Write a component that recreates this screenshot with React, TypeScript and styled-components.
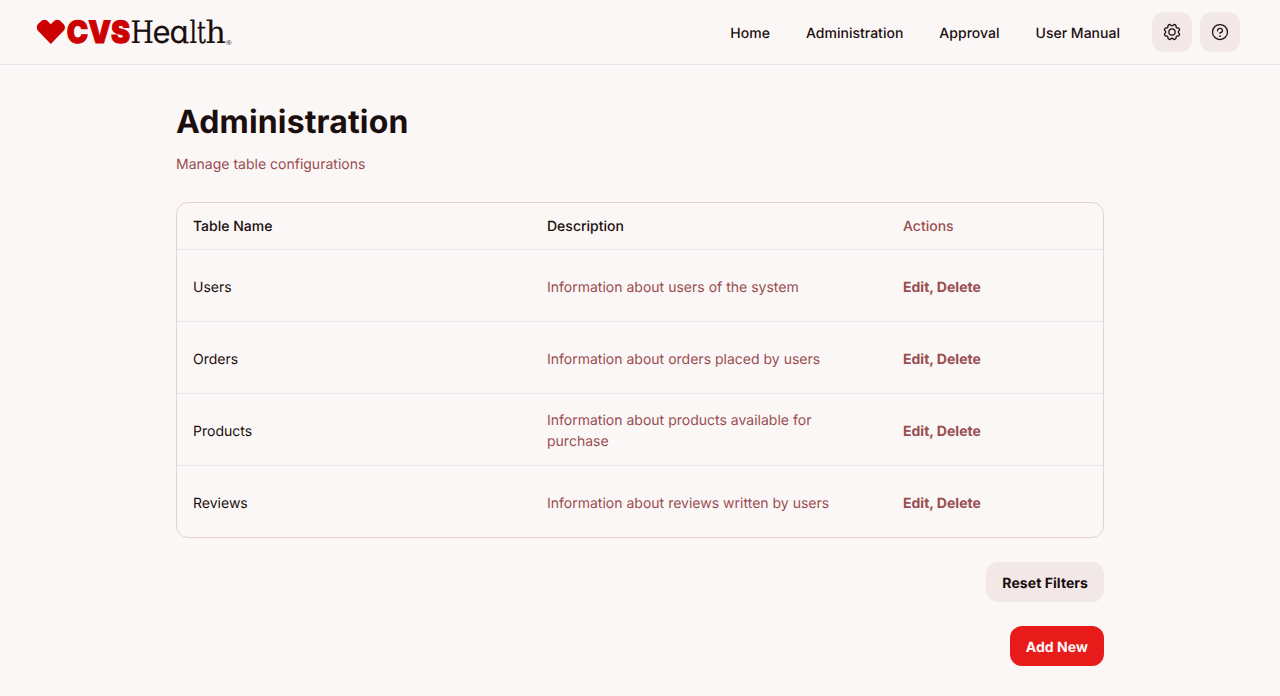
import React from "react";
import styled, { createGlobalStyle } from "styled-components";
import { PiGear, PiQuestion } from "react-icons/pi";

const GlobalStyle = createGlobalStyle`
  *, *::before, *::after { box-sizing: border-box; }
  body {
    margin: 0;
    background: #fbf7f6;
    color: #1b0e0e;
    font-family: Inter, "Noto Sans", sans-serif;
    font-size: 14px;
    line-height: 21px;
    letter-spacing: 0.008px;
    text-rendering: geometricPrecision;
  }
`;

const Header = styled.header`
  display: flex;
  align-items: center;
  justify-content: space-between;
  height: 65px;
  padding: 0 40px 0 36px;
  border-bottom: 1px solid #e5e8eb;
`;

const LogoSvg = styled.svg`
  display: block;
  width: 200px;
  height: 40px;
  overflow: visible;
  letter-spacing: 0;
`;

const HeaderRight = styled.div`
  display: flex;
  align-items: center;
  gap: 32px;
`;

const Nav = styled.nav`
  display: flex;
  gap: 36px;
  padding-top: 2px;
  letter-spacing: 0.016px;
`;

const NavLink = styled.a`
  color: #1b0e0e;
  font-weight: 500;
  text-decoration: none;
`;

const IconGroup = styled.div`
  display: flex;
  gap: 8px;
`;

const IconButton = styled.button`
  display: flex;
  align-items: center;
  justify-content: center;
  width: 40px;
  height: 40px;
  padding: 0;
  border: 0;
  border-radius: 12px;
  background: #f3e8e8;
  color: #1b0e0e;
  font-size: 20px;
`;

const Main = styled.main`
  width: 928px;
  margin: 0 auto;
  padding-top: 37px;
`;

const Title = styled.h1`
  margin: 0;
  font-size: 32px;
  font-weight: 700;
  line-height: 40px;
  letter-spacing: 0.14px;
`;

const Subtitle = styled.p`
  margin: 12px 0 27px;
  color: #994d51;
`;

const TableFrame = styled.div`
  overflow: hidden;
  border: 1px solid #e7d0d1;
  border-radius: 12px;
`;

const Row = styled.div<{ $head?: boolean }>`
  display: grid;
  grid-template-columns: 354px 356px 1fr;
  align-items: center;
  height: ${(p) => (p.$head ? "46px" : "72px")};
  padding-top: ${(p) => (p.$head ? "1px" : "3px")};
  border-top: ${(p) => (p.$head ? "0" : "1px solid #e5e7eb")};
`;

const Cell = styled.div<{ $muted?: boolean; $weight?: number }>`
  padding: 0 16px;
  color: ${(p) => (p.$muted ? "#994d51" : "#1b0e0e")};
  font-weight: ${(p) => p.$weight ?? 400};
`;

const Footer = styled.div`
  display: flex;
  flex-direction: column;
  align-items: flex-end;
  gap: 24px;
  margin-top: 24px;
`;

const Button = styled.button<{ $primary?: boolean }>`
  height: 40px;
  padding: 2px 16px 0;
  border: 0;
  border-radius: 12px;
  background: ${(p) => (p.$primary ? "#e81b1b" : "#f3e8e8")};
  color: ${(p) => (p.$primary ? "#fcf8f8" : "#1b0e0e")};
  font: 700 14px/21px Inter, "Noto Sans", sans-serif;
  letter-spacing: 0.06px;
  text-rendering: geometricPrecision;
`;

const Slab = styled.tspan`
  font-family: "DejaVu Serif", serif;
`;

const Round = styled.tspan`
  font-family: Inter, sans-serif;
  font-feature-settings: "cv11";
`;

const navItems = ["Home", "Administration", "Approval", "User Manual"];

const tables = [
  { name: "Users", description: "Information about users of the system" },
  { name: "Orders", description: "Information about orders placed by users" },
  { name: "Products", description: "Information about products available for purchase" },
  { name: "Reviews", description: "Information about reviews written by users" },
];

function Logo() {
  return (
    <LogoSvg viewBox="0 0 200 40" role="img" aria-label="CVS Health">
      <path
        d="M14.8 12.2 L11 8.6 Q8.4 7 5.8 8.6 L1.8 12.2 Q0.6 13.4 0.9 16.2 Q1 17.8 2.2 19 L14.8 32 L27.4 19 L28.6 17.6 Q30 15.2 28 12.4 L24 8.6 Q21.2 7 18.6 8.6Z"
        fill="#cc0000"
      />
      <text x="30.8" y="31" fill="#cc0000" stroke="#cc0000" strokeWidth="1" fontFamily="Inter, sans-serif" fontWeight="900" fontSize="31" textLength="63.2" lengthAdjust="spacingAndGlyphs">CVS</text>
      <text y="31.4" fill="#1b0e0e" stroke="#1b0e0e" strokeWidth="0.15" fontSize="31">
        <Slab x="94.6" textLength="23.4" lengthAdjust="spacingAndGlyphs">H</Slab>
        <Round x="116.6">e</Round>
        <Round x="133.6">a</Round>
        <Slab x="153.6" textLength="7.6" lengthAdjust="spacingAndGlyphs">l</Slab>
        <Slab x="161" textLength="9" lengthAdjust="spacingAndGlyphs">t</Slab>
        <Slab x="169.6" textLength="20.4" lengthAdjust="spacingAndGlyphs">h</Slab>
      </text>
      <path d="M148 30.5h4.6" stroke="#1b0e0e" strokeWidth="1.6" />
      <text x="190.2" y="33.4" fill="#1b0e0e" fontFamily="Liberation Sans, sans-serif" fontSize="7">®</text>
    </LogoSvg>
  );
}

export default function App() {
  return (
    <>
      <GlobalStyle />
      <Header>
        <Logo />
        <HeaderRight>
          <Nav>
            {navItems.map((item) => (
              <NavLink key={item}>{item}</NavLink>
            ))}
          </Nav>
          <IconGroup>
            <IconButton aria-label="Settings"><PiGear /></IconButton>
            <IconButton aria-label="Help"><PiQuestion /></IconButton>
          </IconGroup>
        </HeaderRight>
      </Header>
      <Main>
        <Title>Administration</Title>
        <Subtitle>Manage table configurations</Subtitle>
        <TableFrame>
          <Row $head>
            <Cell $weight={500}>Table Name</Cell>
            <Cell $weight={500}>Description</Cell>
            <Cell $weight={500} $muted>Actions</Cell>
          </Row>
          {tables.map((t) => (
            <Row key={t.name}>
              <Cell>{t.name}</Cell>
              <Cell $muted>{t.description}</Cell>
              <Cell $muted $weight={700}>Edit, Delete</Cell>
            </Row>
          ))}
        </TableFrame>
        <Footer>
          <Button>Reset Filters</Button>
          <Button $primary>Add New</Button>
        </Footer>
      </Main>
    </>
  );
}
